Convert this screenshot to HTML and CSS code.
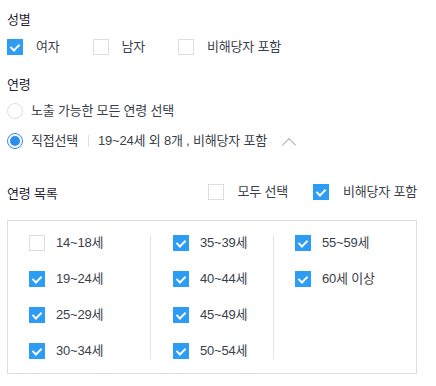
FILE: index.html
```html
<!DOCTYPE html>
<html>
<head>
    <title>타겟 설정</title>
    <link rel="stylesheet" href="styles.css">
</head>
<body>
    <div class="target-form">
        <!-- 성별 -->
        <div class="section-title">성별</div>
        <div class="check-group">
            <label class="check-item"><span class="checkbox checked"></span>여자</label>
            <label class="check-item"><span class="checkbox"></span>남자</label>
            <label class="check-item"><span class="checkbox"></span>비해당자 포함</label>
        </div>

        <!-- 연령 -->
        <div class="section-title age-title">연령</div>
        <div class="radio-group">
            <label class="radio-item"><span class="radio"></span>노출 가능한 모든 연령 선택</label>
            <label class="radio-item selected-row">
                <span class="radio checked"></span>직접선택
                <span class="divider"></span>
                <span class="summary">19~24세 외 8개 , 비해당자 포함</span>
                <span class="chevron"></span>
            </label>
        </div>

        <!-- 연령 목록 -->
        <div class="list-header">
            <div class="list-title">연령 목록</div>
            <div class="list-options">
                <label class="check-item all-item"><span class="checkbox"></span>모두 선택</label>
                <label class="check-item"><span class="checkbox checked"></span>비해당자 포함</label>
            </div>
        </div>

        <div class="age-box">
            <div class="age-col first">
                <label class="age-item"><span class="checkbox"></span>14~18세</label>
                <label class="age-item"><span class="checkbox checked"></span>19~24세</label>
                <label class="age-item"><span class="checkbox checked"></span>25~29세</label>
                <label class="age-item"><span class="checkbox checked"></span>30~34세</label>
            </div>
            <div class="age-col">
                <label class="age-item"><span class="checkbox checked"></span>35~39세</label>
                <label class="age-item"><span class="checkbox checked"></span>40~44세</label>
                <label class="age-item"><span class="checkbox checked"></span>45~49세</label>
                <label class="age-item"><span class="checkbox checked"></span>50~54세</label>
            </div>
            <div class="age-col last">
                <label class="age-item"><span class="checkbox checked"></span>55~59세</label>
                <label class="age-item"><span class="checkbox checked"></span>60세 이상</label>
            </div>
        </div>
    </div>
</body>
</html>
```

FILE: styles.css
```css
body {
    margin: 0;
    background-color: #ffffff;
    color: #3a3f4b;
    font-family: "Liberation Sans", "Noto Sans CJK KR", sans-serif;
    font-size: 13px;
    letter-spacing: -0.2px;
}

.target-form {
    width: 410px;
    padding: 12px 0 0 7px;
}

.section-title {
    color: #1f2330;
    font-size: 13px;
    line-height: 16px;
    height: 16px;
}

.age-title {
    margin-top: 22px;
}

.check-group {
    display: flex;
    margin-top: 11px;
}

.check-item {
    display: flex;
    align-items: center;
    height: 16px;
    line-height: 16px;
}

.check-group .check-item {
    margin-right: 33px;
}

.check-item .checkbox {
    margin-right: 13px;
}

.checkbox {
    width: 16px;
    height: 16px;
    box-sizing: border-box;
    border: 1px solid #dcdee2;
    background-color: #ffffff;
    flex-shrink: 0;
    position: relative;
}

.checkbox.checked {
    background-color: #2d9cf4;
    border-color: #2d9cf4;
}

.checkbox.checked::after {
    content: "";
    position: absolute;
    left: 4px;
    top: 2px;
    width: 4px;
    height: 7px;
    border: solid #ffffff;
    border-width: 0 2px 2px 0;
    transform: rotate(45deg);
}

.radio-group {
    margin-top: 10px;
}

.radio-item {
    display: flex;
    align-items: center;
    height: 16px;
    line-height: 16px;
}

.radio-item + .radio-item {
    margin-top: 14px;
}

.radio {
    width: 16px;
    height: 16px;
    box-sizing: border-box;
    border: 1px solid #dcdee2;
    border-radius: 50%;
    margin-right: 8px;
    position: relative;
}

.radio.checked {
    border-color: #2d8cf0;
}

.radio.checked::after {
    content: "";
    position: absolute;
    left: 2px;
    top: 2px;
    width: 10px;
    height: 10px;
    border-radius: 50%;
    background-color: #2d8cf0;
}

.divider {
    width: 1px;
    height: 12px;
    background-color: #dcdee2;
    margin: 0 9px 0 10px;
}

.chevron {
    width: 9px;
    height: 9px;
    border: solid #aeb2ba;
    border-width: 1px 0 0 1px;
    transform: rotate(45deg);
    margin: 7px 0 0 17px;
}

.list-header {
    display: flex;
    justify-content: space-between;
    align-items: center;
    margin-top: 35px;
    height: 16px;
}

.list-title {
    color: #1f2330;
}

.list-options {
    display: flex;
}

.list-options .checkbox {
    margin-right: 14px;
}

.all-item {
    margin-right: 25px;
}

.age-box {
    display: flex;
    margin-top: 20px;
    border: 1px solid #dcdee2;
    padding: 14px 0;
}

.age-col {
    display: flex;
    flex-direction: column;
    gap: 20px;
    box-sizing: border-box;
    width: 123px;
    padding-left: 22px;
    height: 124px;
    border-left: 1px solid #e3e5e8;
}

.age-col.first {
    width: 142px;
    border-left: none;
    padding-left: 21px;
}

.age-col.last {
    flex: 1;
    padding-left: 21px;
}

.age-item {
    display: flex;
    align-items: center;
    height: 16px;
    line-height: 16px;
}

.age-item .checkbox {
    margin-right: 11px;
}
```
